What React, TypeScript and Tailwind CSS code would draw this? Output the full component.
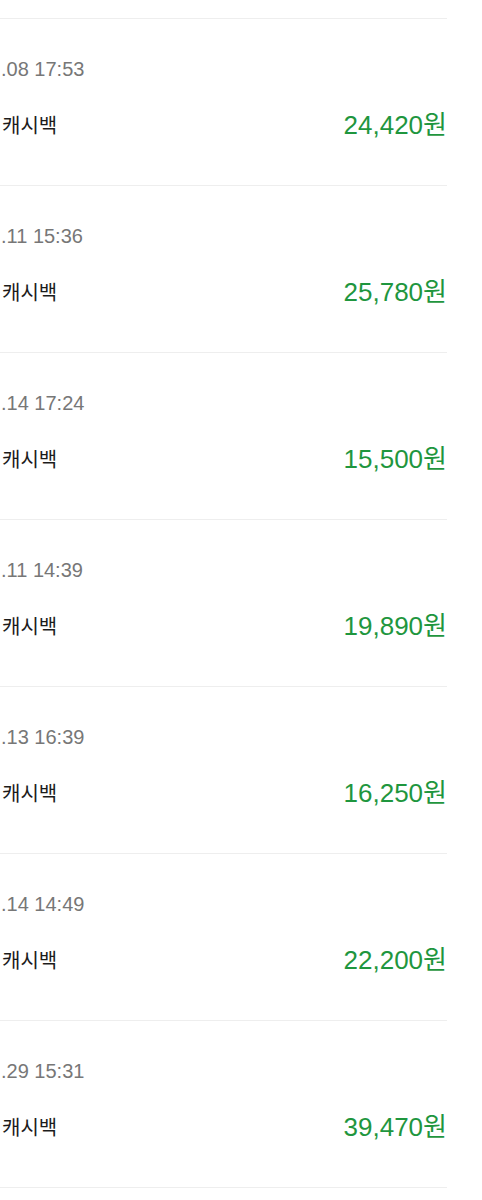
import React from "react";

const rows = [
  { date: ".08 17:53", amount: "24,420원" },
  { date: ".11 15:36", amount: "25,780원" },
  { date: ".14 17:24", amount: "15,500원" },
  { date: ".11 14:39", amount: "19,890원" },
  { date: ".13 16:39", amount: "16,250원" },
  { date: ".14 14:49", amount: "22,200원" },
  { date: ".29 15:31", amount: "39,470원" },
];

export default function App() {
  return (
    <div
      className="w-[482px] min-h-[1200px] bg-white overflow-hidden"
      style={{ fontFamily: '"Liberation Sans", "Noto Sans CJK KR", sans-serif' }}
    >
      <div className="w-[447px]">
        <div className="h-[19px] border-b border-[#eeeeee]" />
        {rows.map((r, i) => (
          <div key={i} className="h-[167px] border-b border-[#eeeeee] flex flex-col">
            <div className="pt-[38px] pl-[1px] text-[20px] leading-[24px] text-[#777777]">
              {r.date}
            </div>
            <div className="mt-[28px] flex items-center justify-between h-[32px]">
              <span
                className="pl-[2px] text-[20px] leading-[32px] text-[#1c1c1c]"
                style={{ fontFamily: '"Noto Sans CJK KR", sans-serif' }}
              >
                캐시백
              </span>
              <span className="text-[26px] leading-[32px] text-[#1f963e]">{r.amount}</span>
            </div>
          </div>
        ))}
      </div>
    </div>
  );
}
